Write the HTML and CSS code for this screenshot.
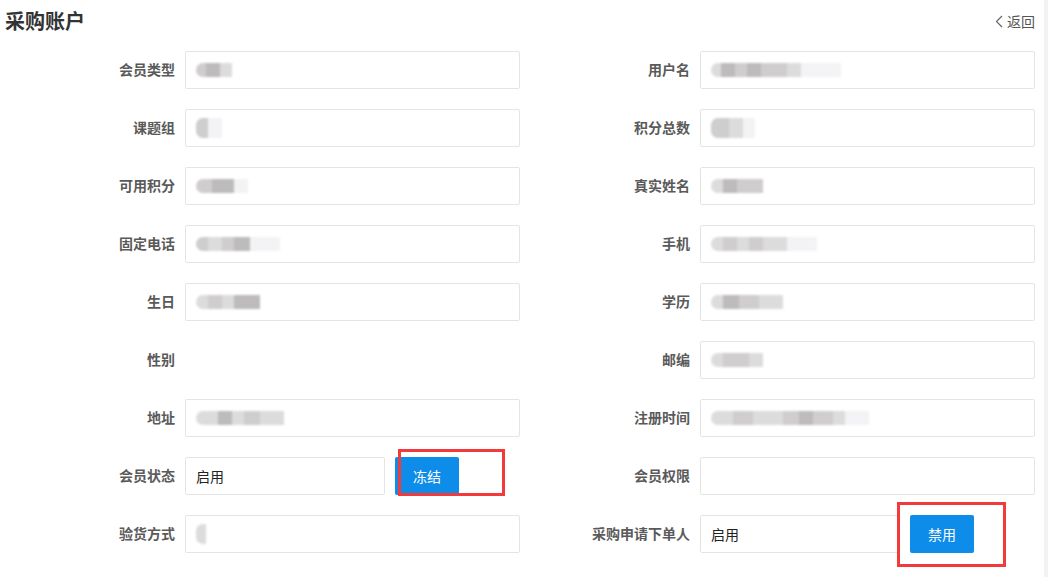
FILE: index.html
```html
<!DOCTYPE html>
<html lang="zh">
<head>
<meta charset="utf-8">
<title>采购账户</title>
<link rel="stylesheet" href="styles.css">
</head>
<body>
<div class="page">
  <div class="header">
    <h1 class="title">采购账户</h1>
    <a class="back" href="#"><svg class="chev" width="8" height="13" viewBox="0 0 8 13"><path d="M7 1 L1.5 6.5 L7 12" fill="none" stroke="#666" stroke-width="1.2"/></svg>返回</a>
  </div>
  <div class="form">
    <div class="field left"><label>会员类型</label><div class="input"><span class="blur"><i class="g2" style="width:10px"></i><i class="g3" style="width:14px"></i><i class="g1" style="width:12px"></i></span></div></div>
    <div class="field right"><label>用户名</label><div class="input"><span class="blur"><i class="g1" style="width:10px"></i><i class="g3" style="width:14px"></i><i class="g2" style="width:12px"></i><i class="g3" style="width:14px"></i><i class="g2" style="width:26px"></i><i class="g1" style="width:14px"></i><i class="g0" style="width:40px"></i></span></div></div>

    <div class="field left"><label>课题组</label><div class="input"><span class="blur tall"><i class="g2" style="width:12px"></i><i class="g0" style="width:14px"></i></span></div></div>
    <div class="field right"><label>积分总数</label><div class="input"><span class="blur tall"><i class="g2" style="width:18px"></i><i class="g1" style="width:14px"></i><i class="g0" style="width:12px"></i></span></div></div>

    <div class="field left"><label>可用积分</label><div class="input"><span class="blur"><i class="g2" style="width:16px"></i><i class="g3" style="width:22px"></i><i class="g0" style="width:14px"></i></span></div></div>
    <div class="field right"><label>真实姓名</label><div class="input"><span class="blur"><i class="g1" style="width:12px"></i><i class="g3" style="width:14px"></i><i class="g2" style="width:26px"></i></span></div></div>

    <div class="field left"><label>固定电话</label><div class="input"><span class="blur"><i class="g2" style="width:12px"></i><i class="g1" style="width:14px"></i><i class="g2" style="width:12px"></i><i class="g3" style="width:16px"></i><i class="g0" style="width:30px"></i></span></div></div>
    <div class="field right"><label>手机</label><div class="input"><span class="blur"><i class="g1" style="width:12px"></i><i class="g2" style="width:14px"></i><i class="g1" style="width:12px"></i><i class="g2" style="width:14px"></i><i class="g1" style="width:24px"></i><i class="g0" style="width:30px"></i></span></div></div>

    <div class="field left"><label>生日</label><div class="input"><span class="blur"><i class="g1" style="width:12px"></i><i class="g2" style="width:14px"></i><i class="g1" style="width:12px"></i><i class="g3" style="width:26px"></i></span></div></div>
    <div class="field right"><label>学历</label><div class="input"><span class="blur"><i class="g1" style="width:12px"></i><i class="g3" style="width:16px"></i><i class="g2" style="width:20px"></i><i class="g1" style="width:24px"></i></span></div></div>

    <div class="field left"><label>性别</label></div>
    <div class="field right"><label>邮编</label><div class="input"><span class="blur"><i class="g1" style="width:12px"></i><i class="g2" style="width:26px"></i><i class="g1" style="width:14px"></i></span></div></div>

    <div class="field left"><label>地址</label><div class="input"><span class="blur"><i class="g1" style="width:22px"></i><i class="g3" style="width:14px"></i><i class="g1" style="width:12px"></i><i class="g2" style="width:16px"></i><i class="g1" style="width:24px"></i></span></div></div>
    <div class="field right"><label>注册时间</label><div class="input"><span class="blur"><i class="g1" style="width:22px"></i><i class="g2" style="width:20px"></i><i class="g1" style="width:30px"></i><i class="g2" style="width:16px"></i><i class="g3" style="width:14px"></i><i class="g2" style="width:20px"></i><i class="g1" style="width:12px"></i><i class="g0" style="width:24px"></i></span></div></div>

    <div class="field left"><label>会员状态</label><div class="input short"><span class="val">启用</span></div><span class="btn-wrap"><button class="btn">冻结</button><span class="mark mark-a"></span></span></div>
    <div class="field right"><label>会员权限</label><div class="input"></div></div>

    <div class="field left"><label>验货方式</label><div class="input"><span class="blur tall"><i class="g1" style="width:10px"></i></span></div></div>
    <div class="field right"><label>采购申请下单人</label><div class="input short"><span class="val">启用</span></div><span class="btn-wrap"><button class="btn">禁用</button><span class="mark mark-b"></span></span></div>
  </div>
  <div class="scroll"></div>
</div>
</body>
</html>
```

FILE: styles.css
```css
* { box-sizing: border-box; }
html, body { margin: 0; padding: 0; background: #fff; }
body {
  font-family: "Noto Sans CJK SC", "Noto Sans", sans-serif;
  font-size: 14px;
  color: #333;
  width: 1048px;
  height: 577px;
  overflow: hidden;
}
.page { position: relative; width: 1048px; height: 577px; }
.scroll {
  position: absolute;
  top: 0; right: 0;
  width: 4px; height: 577px;
  background: #f3f3f3;
}
.header {
  display: flex;
  justify-content: space-between;
  align-items: center;
  height: 42px;
  padding: 0 13px 0 5px;
}
.title {
  margin: 0;
  font-size: 20px;
  font-weight: 700;
  color: #333;
  line-height: 1;
}
.back {
  display: flex;
  align-items: center;
  gap: 4px;
  color: #555;
  text-decoration: none;
  font-size: 14px;
}
.chev { display: block; }
.form {
  display: grid;
  grid-template-columns: 520px 515px;
  row-gap: 20px;
  padding-top: 9px;
}
.field {
  display: flex;
  align-items: center;
  gap: 10px;
  height: 38px;
}
.field label {
  flex: none;
  text-align: right;
  font-weight: 700;
  color: #5a5a5a;
  font-size: 14px;
  line-height: 20px;
  margin-top: -2px;
}
.left label { width: 175px; }
.right label { width: 170px; }
.input {
  flex: 1;
  height: 38px;
  border: 1px solid #e4e4e4;
  border-radius: 2px;
  display: flex;
  align-items: center;
  padding-left: 10px;
}
.input.short { flex: none; width: 200px; }
.val { color: #222; font-size: 14px; }
.blur {
  display: flex;
  height: 14px;
  filter: blur(0.8px);
  border-radius: 7px 0 0 7px;
  overflow: hidden;
}
.blur.tall { height: 20px; }
.blur i { display: block; height: 100%; }
.g0 { background: #f3f3f5; }
.g1 { background: #dddcdd; }
.g2 { background: #cfcdce; }
.g3 { background: #bdbbbc; }
.btn-wrap { position: relative; display: block; }
.btn {
  display: block;
  width: 64px;
  height: 38px;
  border: 0;
  border-radius: 2px;
  background: #0e8ce9;
  color: #fff;
  font-family: inherit;
  font-size: 14px;
  padding: 0;
}
.mark {
  position: absolute;
  border: 3px solid #f23a3a;
  pointer-events: none;
}
.mark-a { left: 3px; top: -8px; width: 107px; height: 47px; }
.mark-b { left: -13px; top: -13px; width: 109px; height: 65px; }
```
